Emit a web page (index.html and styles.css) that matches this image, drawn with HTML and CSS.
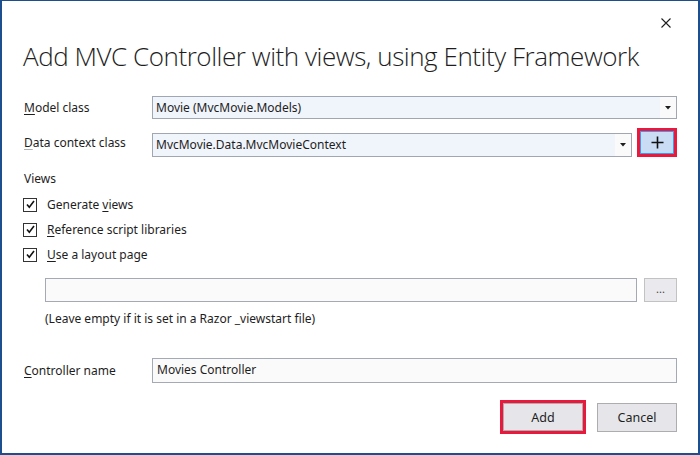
FILE: index.html
```html
<!DOCTYPE html>
<html>
<head>
<meta charset="utf-8">
<link rel="stylesheet" href="styles.css">
</head>
<body>
<div class="dialog">
  <div class="topbar">
    <svg class="close" width="10" height="10" viewBox="0 0 10 10"><path d="M0.5 0.5L9.5 9.5M9.5 0.5L0.5 9.5" stroke="#1e1e1e" stroke-width="1.1" fill="none"/></svg>
  </div>
  <h1 class="title">Add MVC Controller with views, using Entity Framework</h1>

  <div class="row row-model">
    <label class="label"><u>M</u>odel class</label>
    <div class="combo combo-wide">
      <span class="combo-text">Movie (MvcMovie.Models)</span>
      <span class="combo-arrow"><svg width="6" height="4" viewBox="0 0 6 4"><path d="M0 0H6L3 3.5Z" fill="#1e1e1e"/></svg></span>
    </div>
  </div>

  <div class="row row-data">
    <label class="label"><u class="faint">D</u>ata context class</label>
    <div class="combo combo-data">
      <span class="combo-text">MvcMovie.Data.MvcMovieContext</span>
      <span class="combo-arrow"><svg width="6" height="4" viewBox="0 0 6 4"><path d="M0 0H6L3 3.5Z" fill="#1e1e1e"/></svg></span>
    </div>
    <div class="highlight highlight-plus">
      <div class="plus-btn"><svg width="13" height="13" viewBox="0 0 13 13"><path d="M6.5 0.5V12.5M0.5 6.5H12.5" stroke="#111" stroke-width="1.6" fill="none"/></svg></div>
    </div>
  </div>

  <div class="section">Views</div>

  <div class="checks">
    <div class="check-row"><span class="checkbox"><svg width="11" height="11" viewBox="0 0 11 11"><path d="M2 5.5L4.3 8.2L9 2" stroke="#111" stroke-width="1.6" fill="none"/></svg></span><span>Generate <u>v</u>iews</span></div>
    <div class="check-row"><span class="checkbox"><svg width="11" height="11" viewBox="0 0 11 11"><path d="M2 5.5L4.3 8.2L9 2" stroke="#111" stroke-width="1.6" fill="none"/></svg></span><span><u>R</u>eference script libraries</span></div>
    <div class="check-row"><span class="checkbox"><svg width="11" height="11" viewBox="0 0 11 11"><path d="M2 5.5L4.3 8.2L9 2" stroke="#111" stroke-width="1.6" fill="none"/></svg></span><span><u>U</u>se a layout page</span></div>
  </div>

  <div class="layout-row">
    <div class="textbox textbox-layout"></div>
    <div class="browse-btn">...</div>
  </div>
  <div class="hint">(Leave empty if it is set in a Razor _viewstart file)</div>

  <div class="row row-controller">
    <label class="label"><u>C</u>ontroller name</label>
    <div class="textbox textbox-controller">Movies Controller</div>
  </div>

  <div class="buttons">
    <div class="highlight highlight-add"><div class="btn">Add</div></div>
    <div class="btn btn-cancel">Cancel</div>
  </div>
</div>
</body>
</html>
```

FILE: styles.css
```css
html, body {
  margin: 0;
  padding: 0;
  background: #ffffff;
}
.dialog {
  width: 700px;
  height: 455px;
  box-sizing: border-box;
  border: 2px solid #1d4f8e;
  border-top-width: 1px;
  background: #ffffff;
  font-family: "Noto Sans", "Open Sans", sans-serif;
  font-size: 12px;
  color: #1e1e1e;
  display: flex;
  flex-direction: column;
  padding: 0 21px 0 20px;
}
.topbar {
  height: 37px;
  display: flex;
  justify-content: flex-end;
  align-items: flex-start;
  padding-top: 17px;
  box-sizing: border-box;
  padding-right: 6px;
}
.close { display: block; }
.title {
  margin: 0 0 0 1px;
  height: 36px;
  font-family: "Open Sans", sans-serif;
  font-weight: 300;
  font-size: 26px;
  line-height: 36px;
  color: #1e1e1e;
  white-space: nowrap;
  letter-spacing: -0.45px;
}
u { text-decoration-thickness: 1px; text-underline-offset: 2px; }
u.faint { text-decoration-color: #b0b0b0; }
.row {
  display: flex;
  align-items: center;
}
.label {
  width: 130px;
  flex: none;
  padding-left: 2px;
  box-sizing: border-box;
}
.row-model { margin-top: 22px; height: 23px; }
.row-data { margin-top: 9px; height: 29px; }
.combo {
  display: flex;
  align-items: stretch;
  box-sizing: border-box;
  border: 1px solid #a0a7b2;
  background: #f0f4fb;
  height: 23px;
}
.combo-wide { flex: 1; }
.combo-data { width: 483px; margin-top: 4px; height: 24px; }
.combo-text {
  flex: 1;
  padding-left: 3px;
  line-height: 21px;
  white-space: nowrap;
}
.combo-arrow {
  width: 16px;
  background: #fafafa;
  display: flex;
  align-items: center;
  justify-content: center;
}
.combo-arrow svg { display: block; margin-top: 1px; }
.highlight {
  box-sizing: border-box;
  border: 3px solid #e8193c;
}
.highlight-plus {
  margin-left: 5px;
  width: 40px;
  height: 29px;
}
.plus-btn {
  box-sizing: border-box;
  height: 100%;
  border: 1px solid #3a9bf0;
  background: #c9dcf3;
  display: flex;
  align-items: center;
  justify-content: center;
}
.plus-btn svg { display: block; }
.section {
  margin-top: 13px;
  height: 18px;
  line-height: 18px;
  padding-left: 2px;
}
.checks {
  margin-top: 9px;
  display: flex;
  flex-direction: column;
  gap: 10px;
}
.check-row {
  display: flex;
  align-items: center;
  height: 15px;
  gap: 10px;
  padding-left: 1px;
}
.checkbox {
  width: 14px;
  height: 14px;
  box-sizing: border-box;
  border: 1px solid #333333;
  background: #ffffff;
  display: flex;
  align-items: center;
  justify-content: center;
}
.checkbox svg { display: block; }
.layout-row {
  display: flex;
  margin-top: 16px;
  margin-left: 23px;
  gap: 7px;
  height: 24px;
}
.textbox {
  box-sizing: border-box;
  border: 1px solid #a3aab5;
  background: #fafafa;
  line-height: 22px;
  padding-left: 4px;
}
.textbox-layout { flex: 1; }
.browse-btn {
  width: 33px;
  box-sizing: border-box;
  border: 1px solid #c2c2c2;
  background: #e9e9ee;
  text-align: center;
  line-height: 20px;
  font-size: 11px;
  color: #444;
}
.hint {
  margin-top: 8px;
  margin-left: 23px;
  height: 18px;
  line-height: 18px;
}
.row-controller { margin-top: 30px; height: 25px; }
.textbox-controller { flex: 1; height: 25px; }
.buttons {
  margin-top: 17px;
  display: flex;
  justify-content: flex-end;
  align-items: center;
  gap: 11px;
  padding-right: 0;
}
.highlight-add {
  width: 86px;
  height: 34px;
  padding: 0;
}
.btn {
  box-sizing: border-box;
  height: 100%;
  border: 1px solid #adadad;
  background: #e6e6ea;
  display: flex;
  align-items: center;
  justify-content: center;
  font-size: 12.5px;
}
.btn-cancel {
  width: 80px;
  height: 29px;
}
```
